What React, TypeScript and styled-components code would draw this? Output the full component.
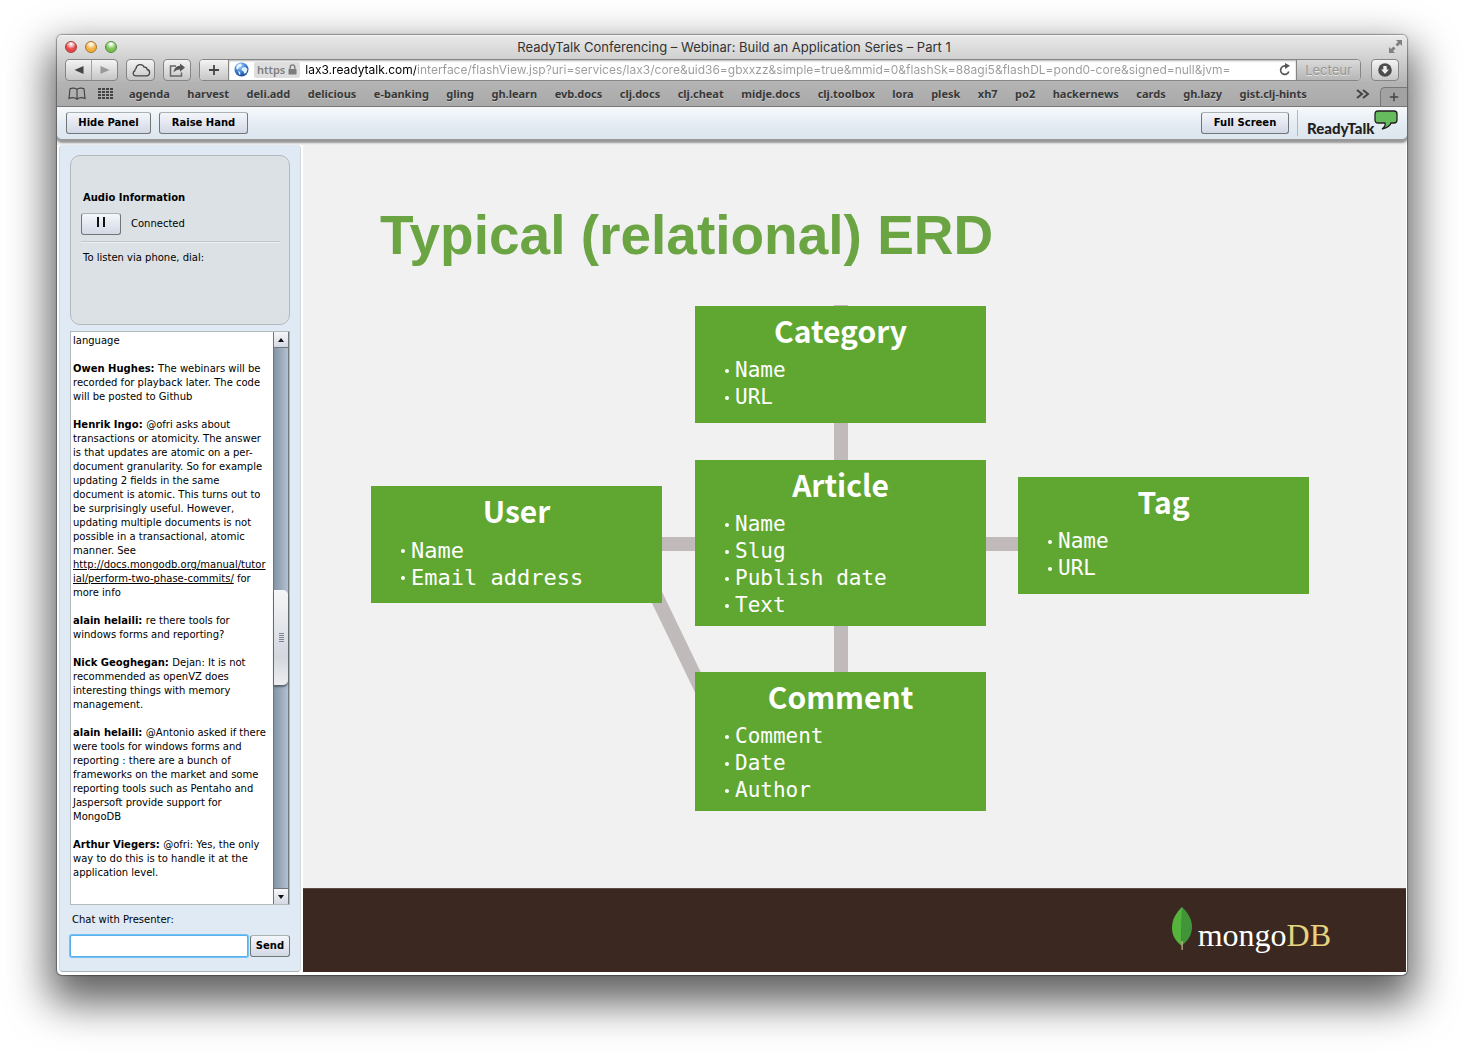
import React from "react";
import styled, { createGlobalStyle } from "styled-components";

const lucida = `"Noto Sans", "Open Sans", sans-serif`;
const wideSans = `Inter, "Noto Sans", sans-serif`;
const verdana = `"DejaVu Sans", sans-serif`;

const GlobalStyle = createGlobalStyle`
  *, *::before, *::after { box-sizing: border-box; }
  body { margin: 0; background: #fff; font-family: ${verdana}; color: #000; }
  button, input { font: inherit; color: inherit; margin: 0; }
  h1, h2, p, ul { margin: 0; padding: 0; }
`;

const Desktop = styled.div`
  display: flex;
  min-height: 100vh;
  padding: 35px 57px 79px;
`;

const Window = styled.div`
  flex: 1;
  min-width: 0;
  display: flex;
  flex-direction: column;
  background: #fff;
  border-radius: 5px;
  overflow: hidden;
  box-shadow: 0 0 1px 1px rgba(0, 0, 0, 0.35), 0 20px 42px 8px rgba(0, 0, 0, 0.62);
`;

/* ---------- browser chrome ---------- */

const Chrome = styled.header`
  background: linear-gradient(#e9e9e9, #cfcfcf 24px, #b3b3b3 48px);
  font-family: ${lucida};
  border-top: 1px solid #f6f6f6;
`;

const TitleBar = styled.div`
  display: grid;
  grid-template-columns: 60px 1fr 60px;
  align-items: center;
  height: 21px;
  padding: 0 4px 0 8px;
`;

const Lights = styled.div`
  display: flex;
  gap: 8px;
`;

const Light = styled.button<{ $tone: string; $edge: string }>`
  width: 12px;
  height: 12px;
  padding: 0;
  border-radius: 50%;
  border: 1px solid ${(p) => p.$edge};
  background: radial-gradient(circle at 50% 20%, #fff 5%, ${(p) => p.$tone} 55%);
`;

const WindowTitle = styled.div`
  text-align: center;
  font-family: ${wideSans};
  font-size: 13px;
  line-height: 20px;
  color: #333;
  white-space: nowrap;
`;

const Expand = styled.button`
  justify-self: end;
  display: flex;
  padding: 0;
  border: 0;
  background: none;
`;

const Toolbar = styled.div`
  display: flex;
  align-items: center;
  height: 25px;
  padding: 0 8px;
`;

const ToolButton = styled.button<{ $width: number }>`
  display: flex;
  align-items: center;
  justify-content: center;
  width: ${(p) => p.$width}px;
  height: 22px;
  padding: 0;
  margin-right: 8px;
  border: 1px solid #858585;
  border-radius: 4px;
  background: linear-gradient(#f4f4f4, #c6c6c6);
`;

const NavGroup = styled.div`
  display: flex;
  width: 53px;
  height: 22px;
  margin-right: 8px;
  border: 1px solid #858585;
  border-radius: 4px;
  background: linear-gradient(#f4f4f4, #c6c6c6);
`;

const NavButton = styled.button`
  flex: 1;
  display: flex;
  align-items: center;
  justify-content: center;
  padding: 0;
  border: 0;
  background: none;
  & + & {
    border-left: 1px solid #a0a0a0;
  }
`;

const AddressGroup = styled.div`
  flex: 1;
  min-width: 0;
  display: flex;
  height: 22px;
  margin-right: 10px;
  border: 1px solid #858585;
  border-radius: 4px;
  background: #fff;
  overflow: hidden;
`;

const AddButton = styled.button`
  display: flex;
  align-items: center;
  justify-content: center;
  width: 29px;
  padding: 0;
  border: 0;
  border-right: 1px solid #858585;
  background: linear-gradient(#f4f4f4, #c6c6c6);
`;

const AddressField = styled.div`
  flex: 1;
  min-width: 0;
  display: flex;
  align-items: center;
  gap: 5px;
  padding: 0 5px 0 5px;
  box-shadow: inset 0 1px 2px rgba(0, 0, 0, 0.3);
`;

const Secure = styled.span`
  display: flex;
  align-items: center;
  gap: 3px;
  height: 16px;
  padding: 0 3px;
  border-radius: 2px;
  background: #dedede;
  font-size: 11px;
  font-weight: 600;
  color: #7d7d7d;
`;

const Address = styled.input`
  flex: 1;
  min-width: 0;
  height: 20px;
  padding: 0;
  border: 0;
  outline: 0;
  font-family: ${wideSans};
  font-size: 12px;
  color: #9a9a9a;
  background: linear-gradient(90deg, #000 111px, #9a9a9a 111px);
  background-clip: text;
  -webkit-text-fill-color: transparent;
`;

const PlainButton = styled.button`
  display: flex;
  padding: 0;
  border: 0;
  background: none;
`;

const ReaderButton = styled.button`
  width: 64px;
  padding: 0;
  border: 0;
  border-left: 1px solid #858585;
  background: linear-gradient(#dadada, #b6b6b6);
  font-family: ${wideSans};
  font-size: 13px;
  line-height: 18px;
  color: #959595;
  text-shadow: 0 1px 0 #e4e4e4;
`;

const DownloadButton = styled(ToolButton)`
  margin-right: 0;
`;

const Bookmarks = styled.nav`
  display: flex;
  align-items: center;
  height: 25px;
  padding-left: 11px;
  background: linear-gradient(#b4b4b4, #a9a9a9);
  border-bottom: 1px solid #777;
`;

const BookmarkIcons = styled.div`
  display: flex;
  align-items: center;
  gap: 12px;
  width: 61px;
`;

const BookmarkList = styled.ul`
  flex: 1;
  display: flex;
  justify-content: space-between;
  list-style: none;
  font-size: 11px;
  line-height: 16px;
  font-weight: 700;
  white-space: nowrap;
`;

const BookmarkLink = styled.a`
  color: #383838;
  text-decoration: none;
  text-shadow: 0 1px 0 #c8c8c8;
`;

const MoreButton = styled(PlainButton)`
  margin: 0 10px 0 49px;
`;

const NewTab = styled.button`
  align-self: flex-end;
  display: flex;
  align-items: center;
  justify-content: center;
  width: 27px;
  height: 19px;
  padding: 0;
  border: 1px solid #777;
  border-width: 1px 0 0 1px;
  border-radius: 5px 0 0 0;
  background: #a2a2a2;
`;

/* ---------- conference app ---------- */

const AppBar = styled.div`
  display: flex;
  align-items: center;
  gap: 8px;
  height: 32px;
  padding: 0 9px;
  background: linear-gradient(#f7fafc, #e2eaf2 60%, #dde6ee);
  border-radius: 0 0 5px 5px;
  box-shadow: 0 3px 2px 1px #989898;
`;

const AppBarWrap = styled.div`
  background: #f1f1f1;
  padding-bottom: 6px;
`;

const FlashButton = styled.button<{ $width: number }>`
  width: ${(p) => p.$width}px;
  height: 22px;
  padding: 0;
  border: 1px solid #6f7777;
  border-top-color: #aab3b3;
  border-radius: 3px;
  background: linear-gradient(#f4f6fb, #d3d8e6);
  font-size: 10px;
  line-height: 18px;
  font-weight: 700;
`;

const Brand = styled.div`
  display: flex;
  align-items: center;
  justify-content: space-between;
  width: 101px;
  height: 26px;
  padding-left: 9px;
  border-left: 1px solid #b3b8bd;
`;

const BrandName = styled.span`
  width: 67px;
  padding-top: 9px;
  font-family: Lato, sans-serif;
  font-weight: 900;
  font-size: 15px;
  line-height: 16px;
  color: #231f20;
`;

const BrandBubble = styled.svg`
  align-self: flex-start;
  display: block;
`;

const Spacer = styled.div`
  flex: 1;
`;

const Workspace = styled.div`
  flex: 1;
  display: flex;
  gap: 2px;
  padding: 0 1px 3px 2px;
`;

const Panel = styled.aside`
  display: flex;
  flex-direction: column;
  width: 242px;
  padding: 10px 10px 14px;
  background: #e0eaf5;
  border: 1px solid #d3d9df;
  border-top: 0;
  border-bottom: 1px solid #aeb3b8;
  border-radius: 4px;
`;

const AudioCard = styled.section`
  height: 170px;
  padding: 34px 9px 0 10px;
  border: 1px solid #b4b9bc;
  border-radius: 10px;
  background: #dce1e5;
`;

const Heading = styled.h2`
  padding-left: 2px;
  font-size: 10px;
  line-height: 16px;
  font-weight: 700;
`;

const AudioRow = styled.div`
  display: flex;
  align-items: center;
  gap: 10px;
  margin-top: 7px;
  padding-bottom: 6px;
  border-bottom: 1px solid #c2c5c8;
  box-shadow: 0 1px 0 #eef0f2;
`;

const Text = styled.p`
  font-size: 10px;
  line-height: 14px;
`;

const DialText = styled(Text)`
  padding: 9px 2px;
`;

const ChatBox = styled.section`
  flex: 1;
  display: flex;
  margin-top: 6px;
  border: 1px solid #b4b9bc;
  background: #fff;
`;

const ChatLog = styled.div`
  flex: 1;
  min-width: 0;
  display: flex;
  flex-direction: column;
  gap: 14px;
  padding: 2px;
`;

const Message = styled.p`
  font-size: 10px;
  line-height: 14px;
  white-space: nowrap;
`;

const DocLink = styled.a`
  color: #000;
  text-decoration: underline;
`;

const ScrollBar = styled.div`
  display: flex;
  flex-direction: column;
  width: 16px;
  border: 1px solid #6f7777;
  border-width: 0 1px;
  background: linear-gradient(90deg, #8394a4, #b4c1d3);
`;

const ScrollArrow = styled.button`
  display: flex;
  align-items: center;
  justify-content: center;
  height: 16px;
  padding: 0;
  border: 1px solid #6f7777;
  border-width: 0 0 1px;
  background: linear-gradient(#f6f7fa, #d4d8e2);
  &:last-child {
    border-width: 1px 0 0;
  }
`;

const Track = styled.div`
  flex: 1;
  display: flex;
  flex-direction: column;
`;

const TrackBefore = styled.div`
  flex: 243;
`;

const TrackAfter = styled.div`
  flex: 203;
`;

const Thumb = styled.div`
  display: flex;
  align-items: center;
  justify-content: center;
  height: 95px;
  border-radius: 0 5px 5px 0;
  background: linear-gradient(#f5f6f7, #d3d7de 70%, #eceef0);
  box-shadow: 0 2px 2px rgba(40, 50, 60, 0.6);
`;

const ChatLabel = styled.label`
  margin: 7px 0 8px 2px;
  font-size: 10px;
  line-height: 15px;
`;

const ChatForm = styled.form`
  display: flex;
  align-items: center;
  gap: 2px;
`;

const ChatInput = styled.input`
  flex: 1;
  min-width: 0;
  height: 22px;
  padding: 0 4px;
  border: 1px solid #5bb0ea;
  border-radius: 2px;
  outline: 0;
  box-shadow: 0 0 0 1px #6fc3f7;
  background: #fff;
  font-size: 10px;
`;

/* ---------- shared slide ---------- */

const Slide = styled.main`
  flex: 1;
  min-width: 0;
  display: flex;
  flex-direction: column;
  background: #f1f1f1;
`;

const SlideTitle = styled.h1`
  padding: 58px 0 0 77px;
  font-family: "Liberation Sans", Arial, sans-serif;
  font-weight: 700;
  font-size: 55px;
  line-height: 64px;
  color: #6ba543;
`;

const Diagram = styled.div`
  position: relative;
  flex: 1;
  min-height: 545px;
  margin: 39px 0 0 68px;
`;

const Connectors = styled.svg`
  position: absolute;
  left: 0;
  top: 0;
`;

const Entity = styled.section<{ $x: number; $y: number; $size: number }>`
  position: absolute;
  left: ${(p) => p.$x}px;
  top: ${(p) => p.$y}px;
  width: 291px;
  min-height: 117px;
  padding: 6px 0 7px 30px;
  background: #5fa731;
  color: #fff;
  font-family: "DejaVu Sans Mono", monospace;
  font-size: ${(p) => p.$size}px;
`;

const EntityName = styled.h2`
  margin: 0 0 9px -30px;
  text-align: center;
  font-family: "Noto Sans CJK SC", "Noto Sans", sans-serif;
  font-weight: 700;
  font-size: 30px;
  line-height: 36px;
`;

const Fields = styled.ul`
  list-style: none;
  line-height: 27px;
`;

const Field = styled.li`
  display: flex;
  align-items: center;
  gap: 6px;
  &::before {
    content: "";
    width: 4px;
    height: 4px;
    border-radius: 50%;
    background: #fff;
  }
`;

const SlideFooter = styled.footer`
  display: flex;
  justify-content: flex-end;
  height: 84px;
  padding: 18px 75px 0 0;
  background: #3b2820;
  border-top: 1px solid #5c4c44;
`;

const MongoName = styled.span`
  padding: 8px 0 0 6px;
  font-family: "Liberation Serif", serif;
  font-size: 32px;
  line-height: 40px;
  color: #fff;
`;

const MongoSuffix = styled.span`
  color: #e7d37f;
`;

const bookmarks = [
  "agenda", "harvest", "deli.add", "delicious", "e-banking", "gling", "gh.learn",
  "evb.docs", "clj.docs", "clj.cheat", "midje.docs", "clj.toolbox", "lora", "plesk",
  "xh7", "po2", "hackernews", "cards", "gh.lazy", "gist.clj-hints",
];

const entities = [
  { name: "Category", x: 324, y: 0, size: 21, fields: ["Name", "URL"] },
  { name: "User", x: 0, y: 180, size: 22, fields: ["Name", "Email address"] },
  { name: "Article", x: 324, y: 154, size: 21, fields: ["Name", "Slug", "Publish date", "Text"] },
  { name: "Tag", x: 647, y: 171, size: 21, fields: ["Name", "URL"] },
  { name: "Comment", x: 324, y: 366, size: 21, fields: ["Comment", "Date", "Author"] },
];

type ChatMessage = { who?: string; lines: React.ReactNode[] };

const messages: ChatMessage[] = [
  { lines: ["language"] },
  {
    who: "Owen Hughes:",
    lines: ["The webinars will be", "recorded for playback later. The code", "will be posted to Github"],
  },
  {
    who: "Henrik Ingo:",
    lines: [
      "@ofri asks about",
      "transactions or atomicity. The answer",
      "is that updates are atomic on a per-",
      "document granularity. So for example",
      "updating 2 fields in the same",
      "document is atomic. This turns out to",
      "be surprisingly useful. However,",
      "updating multiple documents is not",
      "possible in a transactional, atomic",
      "manner. See",
      <DocLink href="#commits">http://docs.mongodb.org/manual/tutor</DocLink>,
      <><DocLink href="#commits">ial/perform-two-phase-commits/</DocLink> for</>,
      "more info",
    ],
  },
  { who: "alain helaili:", lines: ["re there tools for", "windows forms and reporting?"] },
  {
    who: "Nick Geoghegan:",
    lines: ["Dejan: It is not", "recommended as openVZ does", "interesting things with memory", "management."],
  },
  {
    who: "alain helaili:",
    lines: [
      "@Antonio asked if there",
      "were tools for windows forms and",
      "reporting : there are a bunch of",
      "frameworks on the market and some",
      "reporting tools such as Pentaho and",
      "Jaspersoft provide support for",
      "MongoDB",
    ],
  },
  {
    who: "Arthur Viegers:",
    lines: ["@ofri: Yes, the only", "way to do this is to handle it at the", "application level."],
  },
];

function PlusIcon({ size = 12 }: { size?: number }) {
  return (
    <svg width={size} height={size} viewBox="0 0 12 12">
      <path d="M6 1v10M1 6h10" stroke="#444" strokeWidth="1.8" />
    </svg>
  );
}

function BrowserChrome() {
  return (
    <Chrome>
      <TitleBar>
        <Lights>
          <Light $tone="#e8484a" $edge="#a3383a" aria-label="Close" />
          <Light $tone="#f3b03f" $edge="#a8742b" aria-label="Minimize" />
          <Light $tone="#7cc254" $edge="#4f8a37" aria-label="Zoom" />
        </Lights>
        <WindowTitle>ReadyTalk Conferencing – Webinar: Build an Application Series – Part 1</WindowTitle>
        <Expand aria-label="Full screen">
          <svg width="15" height="15" viewBox="0 0 15 15" fill="#808080">
            <path d="M8 1h6v6l-2-2-2.500 2.500-2-2L10 3zM1 8l2 2 2.500-2.500 2 2L5 12l2 2H1z" />
          </svg>
        </Expand>
      </TitleBar>
      <Toolbar>
        <NavGroup>
          <NavButton aria-label="Back">
            <svg width="10" height="8" viewBox="0 0 10 8"><path d="M9.500 0v8L0.500 4z" fill="#444" /></svg>
          </NavButton>
          <NavButton aria-label="Forward">
            <svg width="10" height="8" viewBox="0 0 10 8"><path d="M.5 0v8L9.500 4z" fill="#999" /></svg>
          </NavButton>
        </NavGroup>
        <ToolButton $width={29} aria-label="iCloud tabs">
          <svg width="20" height="14" viewBox="0 0 20 14" fill="none" stroke="#444" strokeWidth="1.300">
            <path d="M4.500 12.800h11a3.200 3.200 0 0 0 .7-6.300 2.700 2.700 0 0 0-3-2.300A4.300 4.300 0 0 0 5 5.500a2.300 2.300 0 0 0-1.200 2.300 2.600 2.600 0 0 0 .7 5z" />
          </svg>
        </ToolButton>
        <ToolButton $width={28} aria-label="Share">
          <svg width="17" height="14" viewBox="0 0 17 14">
            <path d="M7 3H1.500v10h11V9.500" fill="none" stroke="#666" strokeWidth="1.500" />
            <path d="M16 4.500L11 .5v2.300C7 3 5 5.500 4.600 9.500 6.300 7.200 8 6.400 11 6.400v2.300z" fill="#555" />
          </svg>
        </ToolButton>
        <AddressGroup>
          <AddButton aria-label="Add bookmark"><PlusIcon /></AddButton>
          <AddressField>
            <svg width="15" height="15" viewBox="0 0 15 15">
              <defs>
                <radialGradient id="globe" cx=".4" cy=".25" r=".8">
                  <stop offset="0" stopColor="#a9d3f8" />
                  <stop offset=".55" stopColor="#3b7fd0" />
                  <stop offset="1" stopColor="#153f8e" />
                </radialGradient>
              </defs>
              <circle cx="7.500" cy="7.500" r="7" fill="url(#globe)" />
              <path d="M3 3l3-1.500 2 1-1 2-2 1-1 2-2-1zM8 6l3-1 2.500 2-1 3.500-2 1.500-1-2.500-2-1.500zM4 9l2 1 .5 2-1 1z" fill="#e6f2fb" />
            </svg>
            <Secure>
              https
              <svg width="9" height="11" viewBox="0 0 9 11">
                <path d="M2.200 5V3.200a2.300 2.300 0 0 1 4.600 0V5" fill="none" stroke="#7d7d7d" strokeWidth="1.400" />
                <rect x=".5" y="5" width="8" height="5.500" rx=".5" fill="#7d7d7d" />
              </svg>
            </Secure>
            <Address
              aria-label="Address"
              defaultValue="lax3.readytalk.com/interface/flashView.jsp?uri=services/lax3/core&uid36=gbxxzz&simple=true&mmid=0&flashSk=88agi5&flashDL=pond0-core&signed=null&jvm="
            />
            <PlainButton aria-label="Reload">
              <svg width="12" height="13" viewBox="0 0 12 13">
                <path d="M9.800 8.500A4.200 4.200 0 1 1 7 3.100" fill="none" stroke="#555" strokeWidth="1.700" />
                <path d="M6 0l5 2.800-5 3.200z" fill="#555" />
              </svg>
            </PlainButton>
          </AddressField>
          <ReaderButton>Lecteur</ReaderButton>
        </AddressGroup>
        <DownloadButton $width={28} aria-label="Downloads">
          <svg width="14" height="14" viewBox="0 0 14 14">
            <circle cx="7" cy="7" r="6.800" fill="#4c4c4c" />
            <path d="M5.300 3h3.400v3.500h2.300L7 11 3 6.500h2.300z" fill="#eee" />
          </svg>
        </DownloadButton>
      </Toolbar>
      <Bookmarks>
        <BookmarkIcons>
          <svg width="18" height="14" viewBox="0 0 18 14" fill="none" stroke="#444" strokeWidth="1.200">
            <path d="M9 2.500C7.500 1 4 .8 2 1.800L1 11.500c2.500-1 6-1 8 .8 2-1.800 5.500-1.800 8-.8l-1-9.700C14 .8 10.500 1 9 2.500zM9 2.500v9.800" />
          </svg>
          <svg width="16" height="12" viewBox="0 0 16 12" fill="#444">
            {[0, 3, 6, 9].map((y) =>
              [0, 4, 8, 12].map((x) => <rect key={`${x}-${y}`} x={x} y={y} width="3" height="2" />)
            )}
          </svg>
        </BookmarkIcons>
        <BookmarkList>
          {bookmarks.map((name) => (
            <li key={name}><BookmarkLink href={`#${name}`}>{name}</BookmarkLink></li>
          ))}
        </BookmarkList>
        <MoreButton aria-label="More bookmarks">
          <svg width="14" height="10" viewBox="0 0 14 10" fill="none" stroke="#444" strokeWidth="2">
            <path d="M1 1l5 4-5 4M7 1l5 4-5 4" />
          </svg>
        </MoreButton>
        <NewTab aria-label="New tab"><PlusIcon size={10} /></NewTab>
      </Bookmarks>
    </Chrome>
  );
}

function SidePanel() {
  return (
    <Panel>
      <AudioCard>
        <Heading>Audio Information</Heading>
        <AudioRow>
          <FlashButton $width={40} aria-label="Pause audio">
            <svg width="8" height="10" viewBox="0 0 8 10"><path d="M1 0v10M7 0v10" stroke="#111" strokeWidth="2" /></svg>
          </FlashButton>
          <Text>Connected</Text>
        </AudioRow>
        <DialText>To listen via phone, dial:</DialText>
      </AudioCard>
      <ChatBox>
        <ChatLog>
          {messages.map((m, i) => (
            <Message key={i}>
              {m.who && <strong>{m.who} </strong>}
              {m.lines.map((line, n) => (
                <React.Fragment key={n}>
                  {n > 0 && <br />}
                  {line}
                </React.Fragment>
              ))}
            </Message>
          ))}
        </ChatLog>
        <ScrollBar>
          <ScrollArrow aria-label="Scroll up">
            <svg width="6" height="4" viewBox="0 0 6 4"><path d="M0 4h6L3 0z" fill="#111" /></svg>
          </ScrollArrow>
          <Track>
            <TrackBefore />
            <Thumb>
              <svg width="5" height="9" viewBox="0 0 5 9"><path d="M0 .5h5M0 2.500h5M0 4.500h5M0 6.500h5M0 8.500h5" stroke="#7d858c" /></svg>
            </Thumb>
            <TrackAfter />
          </Track>
          <ScrollArrow aria-label="Scroll down">
            <svg width="6" height="4" viewBox="0 0 6 4"><path d="M0 0h6L3 4z" fill="#111" /></svg>
          </ScrollArrow>
        </ScrollBar>
      </ChatBox>
      <ChatLabel htmlFor="chat">Chat with Presenter:</ChatLabel>
      <ChatForm onSubmit={(e) => e.preventDefault()}>
        <ChatInput id="chat" />
        <FlashButton $width={40}>Send</FlashButton>
      </ChatForm>
    </Panel>
  );
}

function SharedSlide() {
  return (
    <Slide>
      <SlideTitle>Typical (relational) ERD</SlideTitle>
      <Diagram>
        <Connectors width="938" height="506" viewBox="0 0 938 506" overflow="visible" stroke="#c0bbba" strokeWidth="14">
          <path d="M470 -1V420M200 238H750M280 279L334 391" fill="none" />
        </Connectors>
        {entities.map((e) => (
          <Entity key={e.name} $x={e.x} $y={e.y} $size={e.size}>
            <EntityName>{e.name}</EntityName>
            <Fields>
              {e.fields.map((f) => <Field key={f}>{f}</Field>)}
            </Fields>
          </Entity>
        ))}
      </Diagram>
      <SlideFooter>
        <svg width="20" height="44" viewBox="0 0 20 44">
          <path d="M10 0C4 6 0 12 0 21c0 8 4 13 9.500 18z" fill="#54b43c" />
          <path d="M10 0c6 6 10 12 10 20 0 9-5 14-10.500 19z" fill="#419539" />
          <path d="M9.200 34h1.600v9H9.600z" fill="#b9a88a" />
        </svg>
        <MongoName>mongo<MongoSuffix>DB</MongoSuffix></MongoName>
      </SlideFooter>
    </Slide>
  );
}

export default function App() {
  return (
    <>
      <GlobalStyle />
      <Desktop>
        <Window>
          <BrowserChrome />
          <AppBarWrap>
            <AppBar>
              <FlashButton $width={85}>Hide Panel</FlashButton>
              <FlashButton $width={89}>Raise Hand</FlashButton>
              <Spacer />
              <FlashButton $width={88}>Full Screen</FlashButton>
              <Brand>
                <BrandName>ReadyTalk</BrandName>
                <BrandBubble width="24" height="20" viewBox="0 0 24 20">
                  <path d="M4 1h16q3 0 3 3v6q0 3-3 3h-3q-1 4-9 6 4-3 3-6H4q-3 0-3-3V4q0-3 3-3z" fill="#66bb5e" stroke="#231f20" strokeWidth="1.300" />
                </BrandBubble>
              </Brand>
            </AppBar>
          </AppBarWrap>
          <Workspace>
            <SidePanel />
            <SharedSlide />
          </Workspace>
        </Window>
      </Desktop>
    </>
  );
}
